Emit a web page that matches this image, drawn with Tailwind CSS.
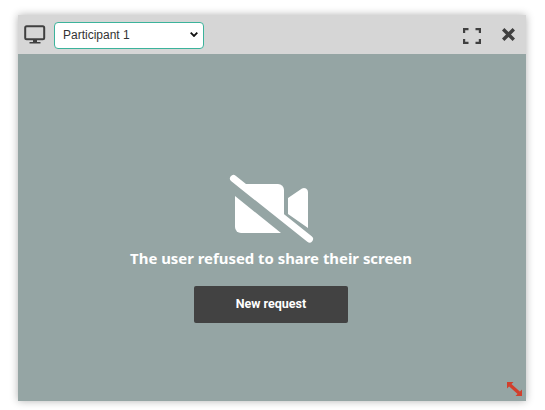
<!DOCTYPE html>
<html lang="en">
<head>
  <meta charset="UTF-8">
  <title>Screen share</title>
  <script src="https://cdn.jsdelivr.net/npm/@tailwindcss/browser@4"></script>
</head>
<body class="bg-white w-[545px] h-[410px] overflow-hidden pt-[15px] pl-[18px]">
  <div class="relative w-[508px] h-[386px] flex flex-col shadow-[0_0_8px_rgba(0,0,0,0.3)]">

    <!-- Header -->
    <div class="h-[39px] bg-[#d6d6d6] flex items-center pl-[6px] pr-[11px]">
      <svg class="w-[22px] h-[20px]" viewBox="0 0 22 20" fill="none">
        <rect x="1.200" y="1.200" width="19" height="13" rx="1.500" stroke="#404040" stroke-width="2"/>
        <path d="M9 15h4v2h3.500v1.600h-11V17H9z" fill="#404040"/>
      </svg>
      <div class="relative ml-[8px] w-[150px] h-[27px]">
        <select class="appearance-none w-full h-full bg-white border-[1.500px] border-[#3cb39b] rounded-[4px] pl-[8px] text-[12px] text-[#333] font-['Liberation_Sans',sans-serif]">
          <option>Participant 1</option>
        </select>
        <svg class="absolute right-[6px] top-[11px] w-[8px] h-[5px] pointer-events-none" viewBox="0 0 8 5" fill="none" stroke="#111" stroke-width="1.800">
          <path d="M.7.7 4 4 7.300.7"/>
        </svg>
      </div>
      <button class="ml-auto w-[18px] h-[16px] mt-[2px]">
        <svg viewBox="0 0 18 16" class="w-[18px] h-[16px] block" fill="none" stroke="#404040" stroke-width="2.200">
          <path d="M1.100 5V1.100H5.500M12.500 1.100h4.400V5M16.900 11v3.900H12.500M5.500 14.900H1.100V11"/>
        </svg>
      </button>
      <button class="ml-[21px] w-[13px] h-[13px]">
        <svg viewBox="0 0 13 13" class="w-[13px] h-[13px] block" fill="none" stroke="#404040" stroke-width="3.400">
          <path d="M1.200 1.200l10.600 10.600M11.800 1.200 1.200 11.800"/>
        </svg>
      </button>
    </div>

    <!-- Body -->
    <div class="flex-1 bg-[#95a5a4] flex flex-col items-center pt-[120px] pr-[2px]">
      <svg class="w-[88px] h-[72px]" viewBox="227 174 88 72" fill="#fff">
        <path d="M241 184H278a6 6 0 0 1 6 6V215Z"/>
        <path d="M235 196 281 233H241a6 6 0 0 1-6-6Z"/>
        <path d="M288 198 302 188.500a4 4 0 0 1 6 3.500V228L288 214Z"/>
        <path d="M233.500 178.500 309.500 239" stroke="#fff" stroke-width="7" stroke-linecap="round"/>
      </svg>
      <p class="mt-[1px] text-[14.900px] leading-[22px] font-bold text-white font-['Noto_Sans',sans-serif]">The user refused to share their screen</p>
      <button class="mt-[17px] w-[154px] h-[37px] bg-[#424242] rounded-[2px] text-white text-[12.500px] font-bold font-['Roboto',sans-serif]">New request</button>
    </div>

    <!-- Resize handle -->
    <svg class="absolute right-[4px] bottom-[5px] w-[15px] h-[14px]" viewBox="0 0 15 14" fill="none">
      <path d="M3 3 12 11" stroke="#d23f2c" stroke-width="3.200"/>
      <path d="M0 0H6.500L0 6.500ZM15 14H8.500L15 7.500Z" fill="#d23f2c"/>
    </svg>
  </div>
</body>
</html>
